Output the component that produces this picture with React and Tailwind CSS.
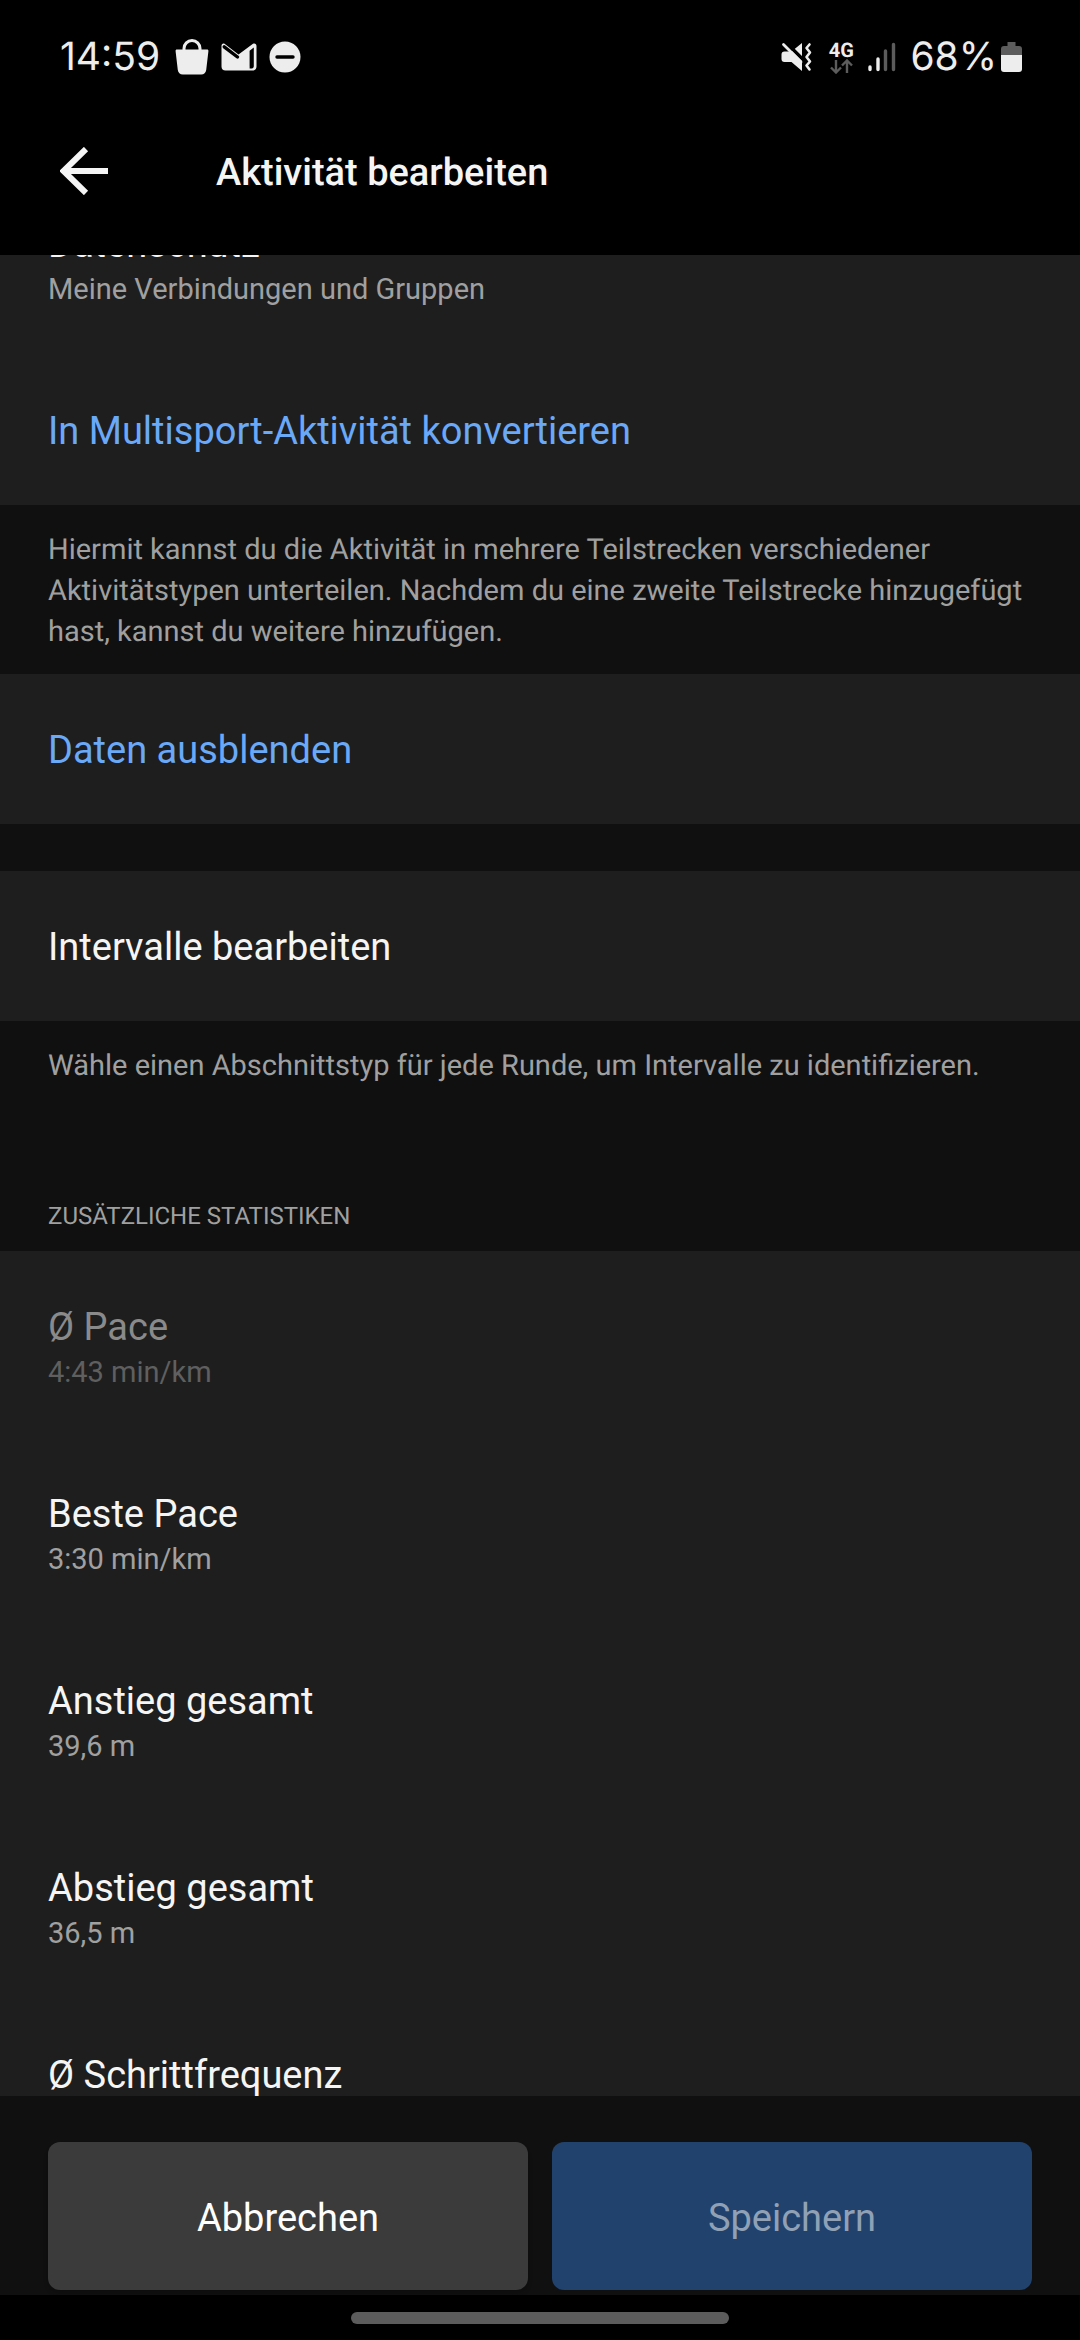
import { useLayoutEffect, useRef } from "react";

function StatusBar() {
  return (
    <div className="flex h-[114px] shrink-0 items-center justify-between pr-[58px] pl-[60px] text-[#ededed]">
      <div className="flex items-center">
        <span className="font-['Inter',sans-serif] text-[39px] leading-[48px]">14:59</span>
        <svg className="ml-[15px] h-9 w-[34px]" viewBox="0 0 34 36" aria-hidden="true">
          <path d="M9 12V9.500a8 8 0 0 1 16 0V12" fill="none" stroke="currentColor" strokeWidth="3" />
          <path
            d="M2 10.500h30c1 0 1.600.7 1.400 1.700L31.200 31c-.3 2.600-2.200 4.500-5 4.500H7.800c-2.800 0-4.700-1.900-5-4.500L.6 12.200C.4 11.200 1 10.500 2 10.500z"
            fill="currentColor"
          />
        </svg>
        <svg className="ml-3 h-7 w-9" viewBox="0 0 36 28" aria-hidden="true">
          <path
            d="M3.500.8 17.500 11.500 32 .8C34 0 35.500 1.200 35.500 3v20.500c0 2.500-1.500 4-4 4h-27c-2.500 0-4-1.500-4-4V3C.5 1.200 1.800 0 3.500.8z"
            fill="currentColor"
          />
          <path d="M3.200 3.800 16.500 14" stroke="#000" strokeWidth="3.400" strokeLinecap="round" />
          <path d="M28.600 7.800 32.800 4.500V23c0 1.500-.8 2.500-2 2.500h-2.200z" fill="#000" />
        </svg>
        <svg className="ml-3 h-8 w-8" viewBox="0 0 32 32" aria-hidden="true">
          <circle cx="16" cy="16" r="15.500" fill="currentColor" />
          <path d="M8 16h16" stroke="#000" strokeWidth="3.400" strokeLinecap="round" />
        </svg>
      </div>
      <div className="flex items-center">
        <svg className="h-[30px] w-[31px]" viewBox="0 0 31 30" aria-hidden="true">
          <path d="M21 1v28l-10.500-9H3.500C1.500 20 .5 19 .5 17v-4.500c0-2 1-3 3-3h7z" fill="currentColor" />
          <path d="M5 0.500 23 18.500" stroke="#000" strokeWidth="3.400" />
          <path d="M2.500 2.500 20 20" stroke="currentColor" strokeWidth="2.800" strokeLinecap="round" />
          <path
            d="M28.500 2.500 25.500 6l3.500 4.500-3.500 4.500 3.500 4.500-3.500 4 3 4"
            fill="none"
            stroke="currentColor"
            strokeWidth="2.600"
            strokeLinecap="round"
            strokeLinejoin="round"
          />
        </svg>
        <div className="ml-4 flex w-[26px] flex-col items-center">
          <span className="font-['Roboto',sans-serif] text-xl leading-[18px] font-bold">4G</span>
          <svg className="h-[15px] w-[23px]" viewBox="0 0 23 15" aria-hidden="true">
            <path
              d="M6 1v12M1 8.500l5 5 5-5M17 14V2M12 6.500l5-5 5 5"
              fill="none"
              stroke="#5c5c5c"
              strokeWidth="2.400"
            />
          </svg>
        </div>
        <svg className="ml-3.5 h-[30px] w-7" viewBox="0 0 28 30" aria-hidden="true">
          <g strokeWidth="3.400" strokeLinecap="round">
            <path d="M2 25v2.500M10 17v10.500" stroke="currentColor" />
            <path d="M17.500 9v18.500M25.500 2.500v25" stroke="#5c5c5c" />
          </g>
        </svg>
        <span className="ml-3.5 font-['Inter',sans-serif] text-[39px] leading-[48px]">68%</span>
        <svg className="ml-1 h-8 w-[21px]" viewBox="0 0 21 32" aria-hidden="true">
          <path d="M6.500 1h8v4H18c2 0 3 1 3 3v6H0V8c0-2 1-3 3-3h3.500z" fill="#5c5c5c" />
          <path d="M0 14h21v14c0 2-1 3-3 3H3c-2 0-3-1-3-3z" fill="currentColor" />
        </svg>
      </div>
    </div>
  );
}

function TopBar() {
  return (
    <header className="flex h-[141px] shrink-0 items-start pt-[27px] pl-[60px]">
      <button type="button" aria-label="Zurück" className="flex h-[60px] w-12 items-center">
        <svg className="h-12 w-12" viewBox="0 0 48 48" aria-hidden="true">
          <path d="M48 24H4M26 2 3.500 24 26 46" fill="none" stroke="currentColor" strokeWidth="6" />
        </svg>
      </button>
      <h1 className="ml-[108px] text-[38px] leading-[64px] font-medium">Aktivität bearbeiten</h1>
    </header>
  );
}

function Row({ title, value, tone = "text-[#f5f5f5]", valueTone = "text-[#a0a0a0]", disabled }) {
  return (
    <button
      type="button"
      disabled={disabled}
      className="flex w-full flex-col items-start bg-[#1e1e1e] px-12 pt-[54px] text-left"
    >
      <span className={`text-[38px] leading-[45px] ${tone}`}>{title}</span>
      {value ? (
        <span className={`mb-11 text-[29px] leading-[44px] ${valueTone}`}>{value}</span>
      ) : (
        <span className="h-[51px]" />
      )}
    </button>
  );
}

function Hint({ children }) {
  return <p className="px-12 pt-[25px] pb-[21px] text-[29px] leading-[41px] text-[#a0a0a0]">{children}</p>;
}

const stats = [
  { title: "Beste Pace", value: "3:30 min/km" },
  { title: "Anstieg gesamt", value: "39,6 m" },
  { title: "Abstieg gesamt", value: "36,5 m" },
  { title: "Ø Schrittfrequenz" },
];

export default function App() {
  const scroller = useRef(null);

  useLayoutEffect(() => {
    scroller.current.scrollTop = 87;
  }, []);

  return (
    <div className="flex h-screen flex-col bg-black font-['Roboto',sans-serif] text-[#f5f5f5] [text-rendering:geometricPrecision]">
      <StatusBar />
      <TopBar />
      <main ref={scroller} className="min-h-0 flex-1 overflow-y-auto bg-[#101010] [scrollbar-width:none]">
        <Row title="Datenschutz" value="Meine Verbindungen und Gruppen" />
        <Row title="In Multisport-Aktivität konvertieren" tone="text-[#6aa9f8]" />
        <Hint>
          Hiermit kannst du die Aktivität in mehrere Teilstrecken verschiedener Aktivitätstypen unterteilen. Nachdem
          du eine zweite Teilstrecke hinzugefügt hast, kannst du weitere hinzufügen.
        </Hint>
        <Row title="Daten ausblenden" tone="text-[#6aa9f8]" />
        <div className="h-[47px]" />
        <Row title="Intervalle bearbeiten" />
        <Hint>Wähle einen Abschnittstyp für jede Runde, um Intervalle zu identifizieren.</Hint>
        <h2 className="px-12 pt-[92px] pb-[19px] text-2xl leading-[32px] text-[#a0a0a0] uppercase">
          Zusätzliche Statistiken
        </h2>
        <Row title="Ø Pace" value="4:43 min/km" tone="text-[#8a8a8a]" valueTone="text-[#5f5f5f]" disabled />
        {stats.map((s) => (
          <Row key={s.title} title={s.title} value={s.value} />
        ))}
      </main>
      <footer className="grid shrink-0 grid-cols-2 gap-6 bg-[#101010] px-12 pt-[46px] pb-[5px]">
        <button type="button" className="h-[148px] rounded-xl bg-[#3b3b3b] pt-1 text-[38px] text-white shadow-md">
          Abbrechen
        </button>
        <button type="button" disabled className="h-[148px] rounded-xl bg-[#21426c] pt-1 text-[38px] text-[#90a1b6]">
          Speichern
        </button>
      </footer>
      <div className="flex h-[45px] shrink-0 justify-center pt-[17px]">
        <div className="h-3 w-[35%] rounded-full bg-[#5c5c5c]" />
      </div>
    </div>
  );
}
